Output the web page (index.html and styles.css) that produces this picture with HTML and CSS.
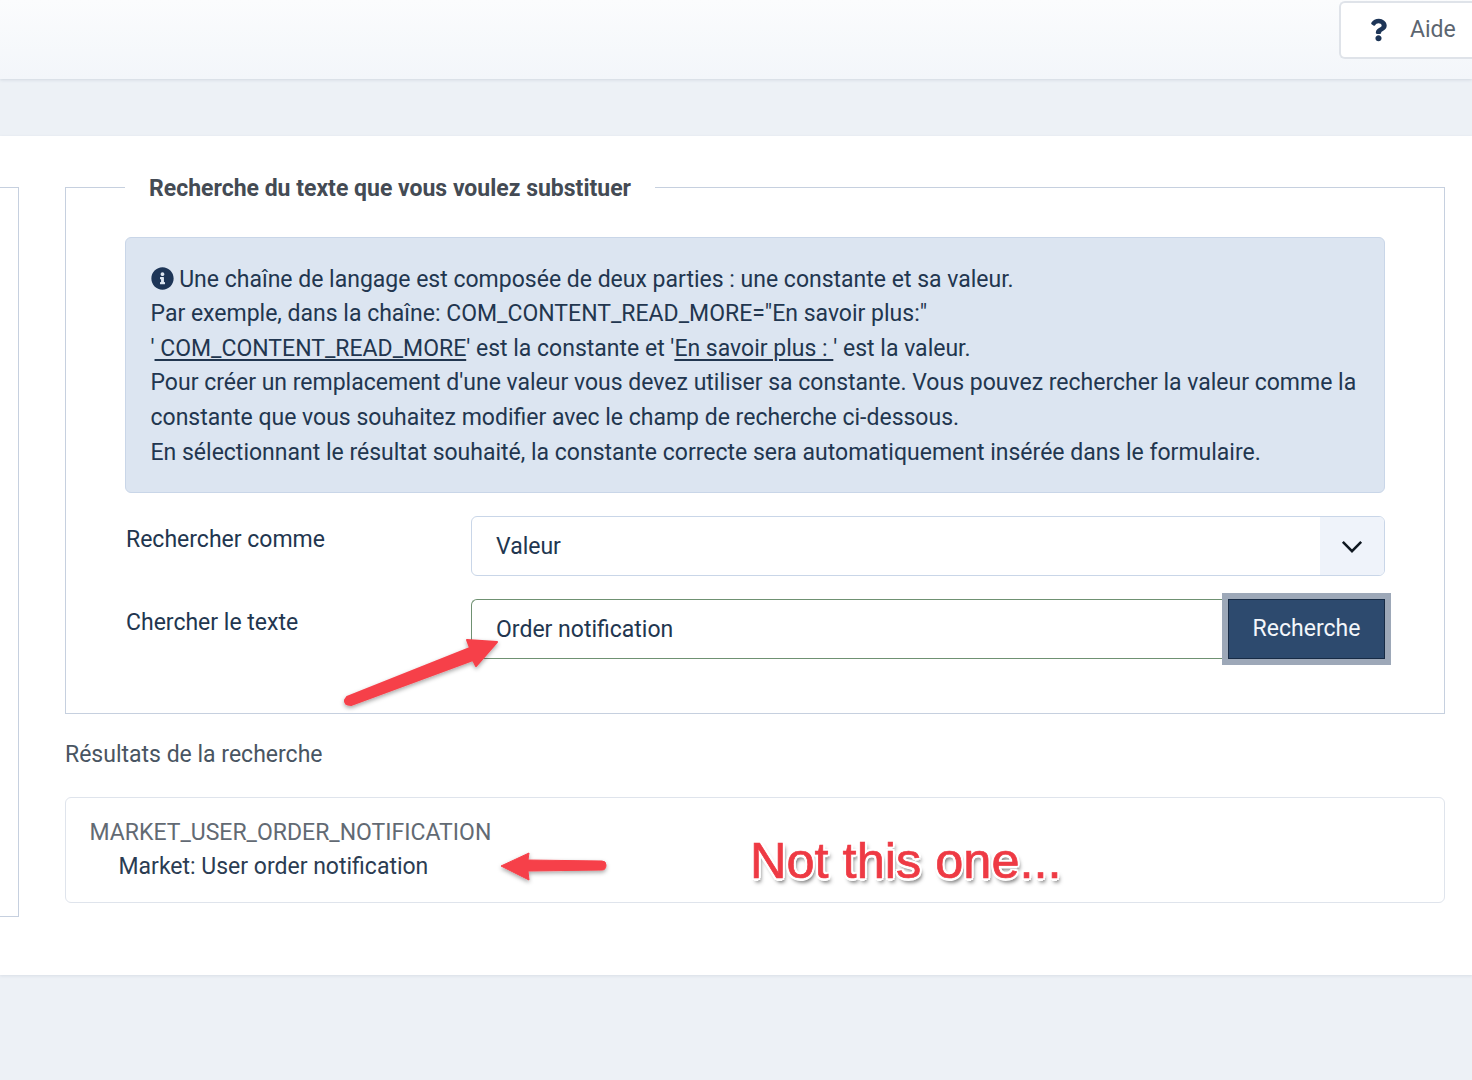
FILE: index.html
```html
<!DOCTYPE html>
<html lang="fr">
<head>
<meta charset="utf-8">
<title>Recherche</title>
<link rel="stylesheet" href="styles.css">
</head>
<body>
<div class="page">
  <header class="topbar">
    <button class="help" type="button">
      <svg class="help-icon" viewBox="0 0 384 512"><path d="M202.021 0C122.202 0 70.503 32.703 29.914 91.026c-7.363 10.58-5.093 25.086 5.178 32.874l43.138 32.709c10.373 7.865 25.132 6.026 33.253-4.148 25.049-31.381 43.63-49.449 82.757-49.449 30.764 0 68.816 19.799 68.816 49.631 0 22.552-18.617 34.134-48.993 51.164-35.423 19.86-82.299 44.576-82.299 106.405V320c0 13.255 10.745 24 24 24h72.471c13.255 0 24-10.745 24-24v-5.773c0-42.86 125.268-44.645 125.268-160.627C377.504 66.256 286.902 0 202.021 0zM192 373.459c-38.196 0-69.271 31.075-69.271 69.271 0 38.195 31.075 69.27 69.271 69.27s69.271-31.075 69.271-69.271-31.075-69.27-69.271-69.27z"/></svg>
      <span>Aide</span>
    </button>
  </header>

  <main class="panel">
    <div class="side-stub"></div>
    <div class="content">
      <fieldset class="search-box">
        <legend>Recherche du texte que vous voulez substituer</legend>
        <div class="alert">
          <svg class="info-icon" viewBox="0 0 512 512"><path d="M256 8C119.043 8 8 119.083 8 256c0 136.997 111.043 248 248 248s248-111.003 248-248C504 119.083 392.957 8 256 8zm0 110c23.196 0 42 18.804 42 42s-18.804 42-42 42-42-18.804-42-42 18.804-42 42-42zm56 254c0 6.627-5.373 12-12 12h-88c-6.627 0-12-5.373-12-12v-24c0-6.627 5.373-12 12-12h12v-64h-12c-6.627 0-12-5.373-12-12v-24c0-6.627 5.373-12 12-12h64c6.627 0 12 5.373 12 12v100h12c6.627 0 12 5.373 12 12v24z"/></svg>
          Une chaîne de langage est composée de deux parties : une constante et sa valeur.<br>
          Par exemple, dans la chaîne: COM_CONTENT_READ_MORE="En savoir plus:"<br>
          '<u> COM_CONTENT_READ_MORE</u>' est la constante et '<u>En savoir plus : </u>' est la valeur.<br>
          Pour créer un remplacement d'une valeur vous devez utiliser sa constante. Vous pouvez rechercher la valeur comme la constante que vous souhaitez modifier avec le champ de recherche ci-dessous.<br>
          En sélectionnant le résultat souhaité, la constante correcte sera automatiquement insérée dans le formulaire.
        </div>
        <div class="form-row">
          <div class="form-label">Rechercher comme</div>
          <div class="select">
            <span class="select-value">Valeur</span>
            <span class="select-arrow">
              <svg class="chevron" viewBox="0 0 24 14"><path d="M2 2l10 10L22 2"/></svg>
            </span>
          </div>
        </div>
        <div class="form-row">
          <div class="form-label">Chercher le texte</div>
          <div class="input-group">
            <div class="text-input">Order notification</div>
            <button class="search-btn" type="button">Recherche</button>
          </div>
        </div>
      </fieldset>

      <h2 class="results-title">Résultats de la recherche</h2>
      <div class="result-card">
        <div class="result-key">MARKET_USER_ORDER_NOTIFICATION</div>
        <div class="result-value">Market: User order notification</div>
      </div>
    </div>
  </main>

  <svg class="arrows" viewBox="0 0 1472 1080">
    <defs>
      <filter id="arrow-shadow" x="-20%" y="-40%" width="140%" height="180%">
        <feDropShadow dx="0" dy="2" stdDeviation="2" flood-color="#000" flood-opacity="0.35"/>
      </filter>
    </defs>
    <g filter="url(#arrow-shadow)" fill="#f6414a" stroke="#f6414a" stroke-linejoin="round">
      <path d="M347 697 L470 648 L467 640 L497 642 L476 666 L473 660 L351 705 Q344 705 345 700 Z" stroke-width="2"/>
      <path d="M501 866 L529 853 L528 860 L602 861 Q606 861 606 865 Q606 870 602 870 L528 871 L529 880 Z" stroke-width="1"/>
    </g>
  </svg>
  <div class="note">Not this one...</div>
</div>
</body>
</html>
```

FILE: styles.css
```css
* {
  box-sizing: border-box;
}

html,
body {
  margin: 0;
  padding: 0;
}

body {
  background: #edf1f6;
  color: #22364f;
  font-family: Roboto, "Liberation Sans", sans-serif;
  font-size: 23px;
  line-height: 34.56px;
}

.page {
  position: relative;
  width: 1472px;
  height: 1080px;
  overflow: hidden;
}

.topbar {
  display: flex;
  justify-content: flex-end;
  height: 79px;
  padding-top: 1px;
  background: linear-gradient(180deg, #fbfcfd 0%, #f3f6fa 100%);
  box-shadow: 0 1px 3px rgba(70, 90, 120, 0.16);
}

.help {
  display: flex;
  align-items: center;
  width: 133px;
  height: 58px;
  padding: 0 0 0 29px;
  background: #fff;
  border: 2px solid #dfe3e9;
  border-right: 0;
  border-radius: 6px 0 0 6px;
  color: #5c6570;
  font: inherit;
}

.help-icon {
  width: 17px;
  height: 24px;
  margin-right: 23px;
  fill: #1d3557;
}

.panel {
  display: flex;
  align-items: flex-start;
  margin-top: 57px;
  height: 839px;
  padding-top: 51px;
  background: #fff;
  box-shadow: 0 1px 3px rgba(70, 90, 120, 0.12);
}

.side-stub {
  flex: none;
  width: 19px;
  height: 730px;
  margin-right: 46px;
  border: 1px solid #c6d0df;
  border-left: 0;
}

.content {
  flex: none;
  width: 1380px;
}

.search-box {
  height: 544px;
  margin: -17px 0 0;
  padding: 0 59px;
  border: 1px solid #c6d0df;
  min-width: 0;
}

legend {
  margin-left: 0;
  padding: 4px 24px 0;
  color: #444b54;
  font-size: 23px;
  font-weight: 700;
  line-height: 30px;
}

.alert {
  margin-top: 33px;
  height: 256px;
  padding: 24.7px 25px 0 24.5px;
  background: #dce5f1;
  border: 1px solid #c9d6e8;
  border-radius: 6px;
}

.info-icon {
  width: 23px;
  height: 23px;
  vertical-align: -3px;
  fill: #1d3557;
}

.alert u {
  text-underline-offset: 3px;
}

.form-row {
  display: flex;
  margin-top: 23px;
}

.form-label {
  flex: none;
  width: 346px;
  padding: 7.4px 0 0 1px;
  line-height: 34.56px;
}

.select {
  display: flex;
  flex: 1;
  height: 60px;
  background: #fff;
  border: 1px solid #c9d6e8;
  border-radius: 6px;
  overflow: hidden;
}

.select-value {
  flex: 1;
  padding: 13px 0 0 24px;
}

.select-arrow {
  display: flex;
  align-items: center;
  justify-content: center;
  width: 64px;
  background: #eff3fa;
}

.chevron {
  width: 22px;
  height: 13px;
  fill: none;
  stroke: #0f1720;
  stroke-width: 2.8;
}

.input-group {
  display: flex;
  flex: 1;
  height: 60px;
}

.text-input {
  flex: 1;
  padding: 13px 0 0 24px;
  background: #fff;
  border: 1px solid #6f9172;
  border-right: 0;
  border-radius: 6px 0 0 6px;
}

.search-btn {
  position: relative;
  flex: none;
  width: 157px;
  height: 60px;
  padding: 0;
  background: #2d4a6e;
  border: 1px solid #172b45;
  outline: 6px solid #9da8b8;
  color: #f3f6fa;
  font: inherit;
}

.results-title {
  margin: 24px 0 24px;
  color: #495562;
  font-size: 23px;
  font-weight: 400;
  line-height: 34.56px;
}

.result-card {
  height: 106px;
  padding: 18px 24px 0 23.5px;
  border: 1px solid #dfe4ec;
  border-radius: 6px;
}

.result-key {
  color: #626a73;
}

.result-value {
  padding-left: 29px;
  color: #2b3c52;
}

.arrows {
  position: absolute;
  left: 0;
  top: 0;
  width: 1472px;
  height: 1080px;
  pointer-events: none;
}

.note {
  position: absolute;
  left: 750px;
  top: 830px;
  color: #ee3a44;
  font-family: "Liberation Sans", Arial, sans-serif;
  font-size: 50.5px;
  line-height: 62px;
  white-space: nowrap;
  -webkit-text-stroke: 0.7px #ee3a44;
  text-shadow:
    2.5px 0 0 #fff, -2.5px 0 0 #fff, 0 2.5px 0 #fff, 0 -2.5px 0 #fff,
    2px 2px 0 #fff, -2px 2px 0 #fff, 2px -2px 0 #fff, -2px -2px 0 #fff,
    2px 4px 4px rgba(0, 0, 0, 0.7);
}
```
